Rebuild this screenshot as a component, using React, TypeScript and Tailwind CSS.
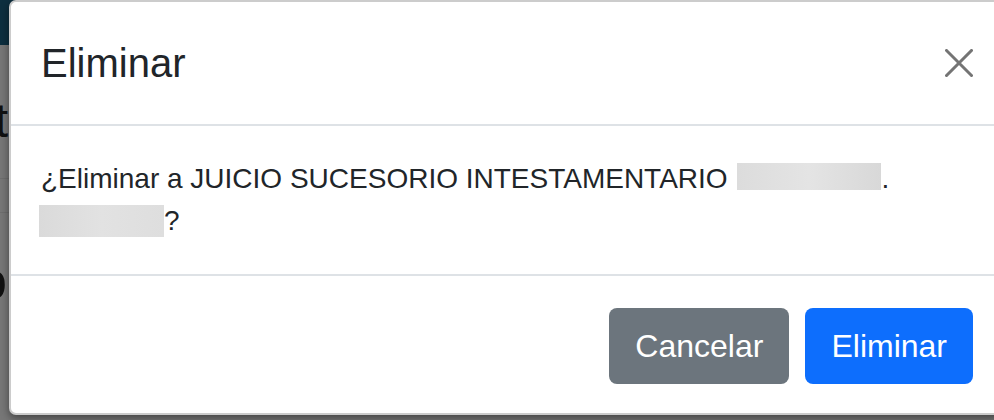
import React from "react";

const App: React.FC = () => {
  return (
    <div className="relative w-[994px] h-[420px] overflow-hidden bg-[#eeeeee] font-['Liberation_Sans',Arial,sans-serif]">
      {/* page behind the backdrop */}
      <div className="h-[45px] bg-[#1a5e7e]" />
      <div className="w-[9px] overflow-hidden flex flex-col items-end text-[#222]">
        <span className="mt-[52px] pr-[1px] whitespace-nowrap text-[48px] leading-[48px]">
          Expedient
        </span>
        <div className="w-full h-[34px] border-b border-[#dcdcdc]" />
        <div className="w-full h-[34px] border-b border-[#dcdcdc]" />
        <span className="mt-[40px] pr-[2px] whitespace-nowrap text-[54px] leading-[54px]">
          Juicio
        </span>
      </div>

      {/* backdrop */}
      <div className="absolute inset-0 bg-black/50" />

      {/* modal */}
      <div className="absolute left-[9px] top-0 w-[994px] bg-white border-2 border-black/20 rounded-[7px] shadow-[0_3px_8px_rgba(0,0,0,0.45)] text-[#212529]">
        <div className="h-[124px] pl-[30px] pr-[28px] flex items-center justify-between border-b-2 border-[#dee2e6]">
          <h5 className="text-[40px] leading-[48px] font-normal">Eliminar</h5>
          <button className="w-[28px] h-[28px] flex items-center justify-center">
            <svg width="28" height="28" viewBox="0 0 28 28">
              <path
                d="M1.5 1.5 L26.5 26.5 M26.5 1.5 L1.5 26.5"
                stroke="#747474"
                strokeWidth="3"
                strokeLinecap="square"
              />
            </svg>
          </button>
        </div>

        <div className="pl-[30px] pr-[28px] py-[32px] border-b-2 border-[#dee2e6] text-[28px] leading-[42px]">
          ¿Eliminar a JUICIO SUCESORIO INTESTAMENTARIO{" "}
          <span className="inline-block ml-[2px] w-[144px] h-[27px] align-[-2px] bg-gradient-to-r from-[#dcdcdc] via-[#e4e4e4] to-[#d8d8d8]" />
          .
          <br />
          <span className="inline-block -ml-[2px] w-[125px] h-[32px] align-[-7px] bg-gradient-to-r from-[#dadada] via-[#e2e2e2] to-[#dedede]" />
          ?
        </div>

        <div className="pt-[32px] pb-[29px] px-[28px] flex justify-end gap-[16px]">
          <button className="h-[76px] px-[26px] rounded-[8px] bg-[#6c757d] text-white text-[32px] leading-[48px]">
            Cancelar
          </button>
          <button className="h-[76px] px-[26px] rounded-[8px] bg-[#0d6efd] text-white text-[32px] leading-[48px]">
            Eliminar
          </button>
        </div>
      </div>
    </div>
  );
};

export default App;
